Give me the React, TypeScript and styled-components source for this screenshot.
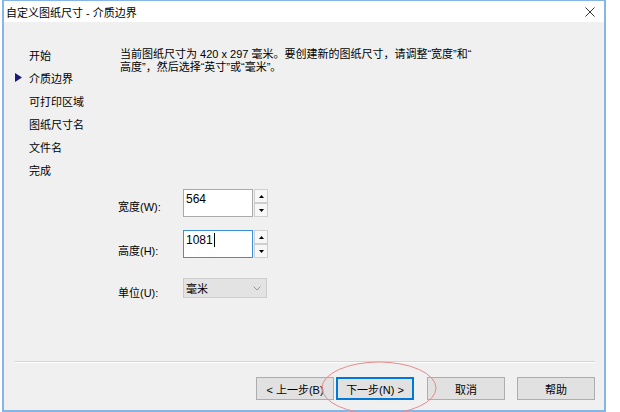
import React from "react";
import styled, { createGlobalStyle } from "styled-components";

const GlobalStyle = createGlobalStyle`
  body {
    margin: 0;
    background: #ffffff;
    font-family: "Liberation Sans", "Noto Sans CJK SC", sans-serif;
    font-size: 11px;
    color: #000000;
  }
`;

const Frame = styled.div`
  position: relative;
  box-sizing: border-box;
  width: 604px;
  height: 412px;
  margin-left: 2px;
  border: 2px solid #86b6e6;
  border-top: 1px solid #86b6e6;
  display: flex;
  flex-direction: column;
`;

const TitleBar = styled.div`
  height: 21px;
  background: #ffffff;
  display: flex;
  align-items: center;
  justify-content: space-between;
  padding: 0 9px 0 2px;
  font-size: 11px;
`;

const CloseGlyph = styled.svg`
  width: 10px;
  height: 10px;
`;

const Body = styled.div`
  flex: 1;
  background: #f0f0f0;
  display: flex;
  flex-direction: column;
`;

const Main = styled.div`
  flex: 1;
  display: flex;
`;

const Nav = styled.ul`
  list-style: none;
  margin: 0;
  padding: 21px 0 0 11px;
  width: 105px;
`;

const NavItem = styled.li`
  display: flex;
  align-items: center;
  height: 23px;
`;

const Marker = styled.span<{ $on?: boolean }>`
  width: 14px;
  display: flex;
  align-items: center;
  visibility: ${(p) => (p.$on ? "visible" : "hidden")};
`;

const Content = styled.div`
  flex: 1;
  padding-top: 26px;
`;

const Intro = styled.p`
  margin: 0;
  line-height: 13px;
`;

const Form = styled.div`
  display: flex;
  flex-direction: column;
  margin-top: 115px;
`;

const Row = styled.div<{ $gap: number }>`
  display: flex;
  align-items: center;
  margin-top: ${(p) => p.$gap}px;
`;

const Label = styled.label<{ $drop: number }>`
  width: 65px;
  margin-left: -2px;
  padding-top: ${(p) => p.$drop}px;
`;

const TextBox = styled.div<{ $focused?: boolean }>`
  box-sizing: border-box;
  width: 70px;
  height: 28px;
  background: #ffffff;
  border: 1px solid ${(p) => (p.$focused ? "#3c8fdb" : "#a9a9a9")};
  padding: 2px 0 0 2px;
  font-size: 12px;
  display: flex;
  align-items: flex-start;
`;

const Caret = styled.span`
  display: inline-block;
  width: 1px;
  height: 14px;
  background: #000;
  margin-left: 1px;
`;

const Spinner = styled.div`
  display: flex;
  flex-direction: column;
  margin-left: 1px;
`;

const SpinButton = styled.div`
  box-sizing: border-box;
  width: 14px;
  height: 14px;
  border: 1px solid #cfcfcf;
  background: #f7f7f7;
  display: flex;
  align-items: center;
  justify-content: center;
  & + & {
    margin-top: 0;
  }
`;

const Select = styled.div`
  box-sizing: border-box;
  width: 84px;
  height: 20px;
  background: #e3e3e3;
  border: 1px solid #cccccc;
  display: flex;
  align-items: center;
  justify-content: space-between;
  padding: 0 5px 0 2px;
`;

const Separator = styled.div`
  height: 0;
  border-top: 1px solid #d4d4d4;
  border-bottom: 1px solid #ffffff;
  margin: 0 9px 0 11px;
`;

const Footer = styled.div`
  display: flex;
  justify-content: flex-end;
  padding: 14px 9px 10px 0;
`;

const Button = styled.button<{ $primary?: boolean; $gap?: number }>`
  box-sizing: border-box;
  width: 78px;
  height: 23px;
  margin-left: ${(p) => p.$gap ?? 0}px;
  background: #e1e1e1;
  border: 1px solid ${(p) => (p.$primary ? "#0078d7" : "#adadad")};
  box-shadow: ${(p) => (p.$primary ? "inset 0 0 0 1px #0078d7" : "none")};
  font-family: inherit;
  font-size: 11px;
  color: #000;
  padding: 0;
`;

const Circle = styled.svg`
  position: absolute;
  left: 316px;
  top: 359px;
  width: 118px;
  height: 56px;
  overflow: visible;
  pointer-events: none;
`;

const Triangle = ({ dir }: { dir: "up" | "down" }) => (
  <svg width="5" height="3" viewBox="0 0 5 3">
    <polygon points={dir === "up" ? "2.5,0 5,3 0,3" : "0,0 5,0 2.5,3"} fill="#000" />
  </svg>
);

const NumberField = ({ value, focused }: { value: string; focused?: boolean }) => (
  <>
    <TextBox $focused={focused}>
      {value}
      {focused && <Caret />}
    </TextBox>
    <Spinner>
      <SpinButton>
        <Triangle dir="up" />
      </SpinButton>
      <SpinButton>
        <Triangle dir="down" />
      </SpinButton>
    </Spinner>
  </>
);

const steps = ["开始", "介质边界", "可打印区域", "图纸尺寸名", "文件名", "完成"];

export default function App() {
  return (
    <>
      <GlobalStyle />
      <Frame>
        <TitleBar>
          <span>自定义图纸尺寸 - 介质边界</span>
          <CloseGlyph viewBox="0 0 10 10">
            <path d="M0.5 0.5 L9.5 9.5 M9.5 0.5 L0.5 9.5" stroke="#333" strokeWidth="1" />
          </CloseGlyph>
        </TitleBar>
        <Body>
          <Main>
            <Nav>
              {steps.map((s, i) => (
                <NavItem key={s}>
                  <Marker $on={i === 1}>
                    <svg width="7" height="9" viewBox="0 0 7 9">
                      <polygon points="0,0 7,4.5 0,9" fill="#1a1a7a" />
                    </svg>
                  </Marker>
                  {s}
                </NavItem>
              ))}
            </Nav>
            <Content>
              <Intro>
                当前图纸尺寸为 420 x 297 毫米。要创建新的图纸尺寸，请调整“宽度”和“
                <br />
                高度”，然后选择“英寸”或“毫米”。
              </Intro>
              <Form>
                <Row $gap={0}>
                  <Label $drop={6}>宽度(W):</Label>
                  <NumberField value="564" />
                </Row>
                <Row $gap={13}>
                  <Label $drop={12}>高度(H):</Label>
                  <NumberField value="1081" focused />
                </Row>
                <Row $gap={18}>
                  <Label $drop={8}>单位(U):</Label>
                  <Select>
                    <span>毫米</span>
                    <svg width="8" height="5" viewBox="0 0 8 5">
                      <path d="M0.5 0.5 L4 4 L7.5 0.5" stroke="#9a9a9a" fill="none" strokeWidth="1" />
                    </svg>
                  </Select>
                </Row>
              </Form>
            </Content>
          </Main>
          <Separator />
          <Footer>
            <Button>&lt; 上一步(B)</Button>
            <Button $primary $gap={2}>
              下一步(N) &gt;
            </Button>
            <Button $gap={13}>取消</Button>
            <Button $gap={12}>帮助</Button>
          </Footer>
        </Body>
        <Circle viewBox="0 0 118 56">
          <ellipse cx="59" cy="28" rx="57" ry="26" fill="none" stroke="#e88a8a" strokeWidth="1" />
        </Circle>
      </Frame>
    </>
  );
}
